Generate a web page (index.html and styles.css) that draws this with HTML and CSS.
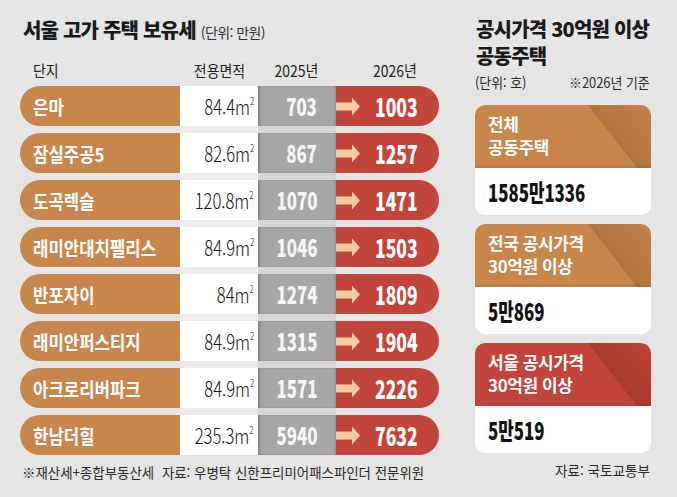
FILE: index.html
```html
<!DOCTYPE html>
<html lang="ko">
<head>
<meta charset="utf-8">
<title>서울 고가 주택 보유세</title>
<link rel="stylesheet" href="styles.css">
</head>
<body>
<div class="page">
  <section class="left">
    <h1 class="title">서울 고가 주택 보유세 <span class="unit">(단위: 만원)</span></h1>
    <div class="thead">
      <div class="h1"><span class="sx">단지</span></div>
      <div class="h2"><span class="sx c">전용면적</span></div>
      <div class="h3"><span class="sx r">2025년</span></div>
      <div class="h4"><span class="sx">2026년</span></div>
    </div>
    <div class="rows">
      <div class="row"><div class="name"><span class="sx">은마</span></div><div class="area"><span class="sx r">84.4m<sup>2</sup></span></div><div class="y25"><span class="sx r">703</span></div><div class="y26"><svg class="arrow" viewBox="0 0 24 19" width="24" height="19"><polygon points="0,5.5 16,5.5 16,0.5 24,9.5 16,18.5 16,13.5 0,13.5"/></svg><span class="sx">1003</span></div></div>
      <div class="row"><div class="name"><span class="sx">잠실주공5</span></div><div class="area"><span class="sx r">82.6m<sup>2</sup></span></div><div class="y25"><span class="sx r">867</span></div><div class="y26"><svg class="arrow" viewBox="0 0 24 19" width="24" height="19"><polygon points="0,5.5 16,5.5 16,0.5 24,9.5 16,18.5 16,13.5 0,13.5"/></svg><span class="sx">1257</span></div></div>
      <div class="row"><div class="name"><span class="sx">도곡렉슬</span></div><div class="area"><span class="sx r">120.8m<sup>2</sup></span></div><div class="y25"><span class="sx r">1070</span></div><div class="y26"><svg class="arrow" viewBox="0 0 24 19" width="24" height="19"><polygon points="0,5.5 16,5.5 16,0.5 24,9.5 16,18.5 16,13.5 0,13.5"/></svg><span class="sx">1471</span></div></div>
      <div class="row"><div class="name"><span class="sx">래미안대치팰리스</span></div><div class="area"><span class="sx r">84.9m<sup>2</sup></span></div><div class="y25"><span class="sx r">1046</span></div><div class="y26"><svg class="arrow" viewBox="0 0 24 19" width="24" height="19"><polygon points="0,5.5 16,5.5 16,0.5 24,9.5 16,18.5 16,13.5 0,13.5"/></svg><span class="sx">1503</span></div></div>
      <div class="row"><div class="name"><span class="sx">반포자이</span></div><div class="area"><span class="sx r">84m<sup>2</sup></span></div><div class="y25"><span class="sx r">1274</span></div><div class="y26"><svg class="arrow" viewBox="0 0 24 19" width="24" height="19"><polygon points="0,5.5 16,5.5 16,0.5 24,9.5 16,18.5 16,13.5 0,13.5"/></svg><span class="sx">1809</span></div></div>
      <div class="row"><div class="name"><span class="sx">래미안퍼스티지</span></div><div class="area"><span class="sx r">84.9m<sup>2</sup></span></div><div class="y25"><span class="sx r">1315</span></div><div class="y26"><svg class="arrow" viewBox="0 0 24 19" width="24" height="19"><polygon points="0,5.5 16,5.5 16,0.5 24,9.5 16,18.5 16,13.5 0,13.5"/></svg><span class="sx">1904</span></div></div>
      <div class="row"><div class="name"><span class="sx">아크로리버파크</span></div><div class="area"><span class="sx r">84.9m<sup>2</sup></span></div><div class="y25"><span class="sx r">1571</span></div><div class="y26"><svg class="arrow" viewBox="0 0 24 19" width="24" height="19"><polygon points="0,5.5 16,5.5 16,0.5 24,9.5 16,18.5 16,13.5 0,13.5"/></svg><span class="sx">2226</span></div></div>
      <div class="row"><div class="name"><span class="sx">한남더힐</span></div><div class="area"><span class="sx r">235.3m<sup>2</sup></span></div><div class="y25"><span class="sx r">5940</span></div><div class="y26"><svg class="arrow" viewBox="0 0 24 19" width="24" height="19"><polygon points="0,5.5 16,5.5 16,0.5 24,9.5 16,18.5 16,13.5 0,13.5"/></svg><span class="sx">7632</span></div></div>
    </div>
    <p class="foot"><span class="sx">※재산세+종합부동산세<span class="src">자료: 우병탁 신한프리미어패스파인더 전문위원</span></span></p>
  </section>
  <aside class="right">
    <h2 class="rtitle">공시가격 30억원 이상<br>공동주택</h2>
    <div class="meta"><span class="sx">(단위: 호)</span><span class="sx r">※2026년 기준</span></div>
    <div class="cards">
      <div class="card orange">
        <div class="chead"><span class="ln">전체</span><span class="ln">공동주택</span></div>
        <div class="cbody"><span class="sx">1585만1336</span></div>
      </div>
      <div class="card orange">
        <div class="chead"><span class="ln">전국 공시가격</span><span class="ln">30억원 이상</span></div>
        <div class="cbody"><span class="sx">5만869</span></div>
      </div>
      <div class="card red">
        <div class="chead"><span class="ln">서울 공시가격</span><span class="ln">30억원 이상</span></div>
        <div class="cbody"><span class="sx">5만519</span></div>
      </div>
    </div>
    <p class="rfoot"><span class="sx r">자료: 국토교통부</span></p>
  </aside>
</div>
</body>
</html>
```
FILE: styles.css
```css
html, body {
  margin: 0;
  padding: 0;
}
body {
  background: #e5e5e5;
  font-family: "Noto Sans CJK KR", "Noto Sans", sans-serif;
  color: #1a1a1a;
}
.page {
  width: 677px;
  height: 497px;
  box-sizing: border-box;
  padding-left: 20px;
  display: flex;
  gap: 36px;
  overflow: hidden;
}
.sx {
  display: inline-block;
  transform-origin: left center;
}
.sx.r { transform-origin: right center; }
.sx.c { transform-origin: center center; }

/* left */
.left {
  width: 419px;
  display: flex;
  flex-direction: column;
}
.title {
  margin: 18px 0 0 3px;
  font-size: 20px;
  line-height: 24px;
  font-weight: 900;
  letter-spacing: -0.8px;
  display: flex;
  align-items: baseline;
  gap: 5px;
}
.unit {
  font-size: 14px;
  font-weight: 400;
  letter-spacing: -0.6px;
  color: #333;
}
.thead {
  display: grid;
  grid-template-columns: 160px 78px 78px 103px;
  margin-top: 16px;
  height: 20px;
  line-height: 20px;
  font-size: 16px;
  color: #222;
}
.thead .sx { transform: scaleX(.87); }
.h1 { padding-left: 13px; }
.h2 { text-align: center; }
.h3 { text-align: right; padding-right: 18px; }
.h4 { padding-left: 37px; }

.rows {
  margin-top: 6px;
  display: flex;
  flex-direction: column;
  gap: 7px;
  background: linear-gradient(to right,
    transparent 160px, #ececec 160px, #ececec 238px,
    #d6d6d6 238px, #d6d6d6 316px, transparent 316px);
}
.row {
  display: grid;
  grid-template-columns: 160px 78px 78px 103px;
  height: 40px;
}
.row > div {
  display: flex;
  align-items: center;
  line-height: 1;
}
.name {
  background: #c7874c;
  border-radius: 20px 0 0 20px;
  color: #fff;
  font-weight: 700;
  font-size: 19px;
  padding-left: 13px;
}
.name .sx { transform: scaleX(.88); white-space: nowrap; }
.area {
  background: #fff;
  justify-content: flex-end;
  padding-right: 4px;
  font-size: 21px;
  font-weight: 300;
  color: #111;
}
.area .sx { transform: scaleX(.79); }
.area sup {
  font-size: 10px;
  vertical-align: 10px;
  line-height: 0;
}
.y25 {
  background: #a7a7a7;
  box-shadow: inset 3px 0 3px -1px rgba(0,0,0,.22), inset -2px 0 3px -1px rgba(0,0,0,.18);
  justify-content: flex-end;
  padding-right: 19px;
  color: #f6f6f6;
  font-weight: 900;
  font-size: 24px;
}
.y25 .sx { transform: scaleX(.7); }
.y26 {
  background: #c1453a;
  border-radius: 0 20px 20px 0;
  color: #fff;
  font-weight: 900;
  font-size: 25px;
}
.y26 .sx { transform: scaleX(.7); margin-left: 15px; }
.arrow {
  display: block;
  fill: #f4cba3;
  flex: none;
}
.foot {
  margin: 8px 0 0 2px;
  font-size: 14px;
  line-height: 18px;
  color: #2a2a2a;
  white-space: nowrap;
}
.foot .sx { transform: scaleX(.96); }
.src { margin-left: 8px; }

/* right */
.right {
  width: 176px;
  display: flex;
  flex-direction: column;
}
.rtitle {
  margin: 15px 0 0 1px;
  font-size: 20px;
  line-height: 27px;
  font-weight: 900;
  letter-spacing: -0.8px;
}
.meta {
  margin-top: 4px;
  display: flex;
  justify-content: space-between;
  font-size: 14px;
  line-height: 18px;
  color: #2a2a2a;
  padding-right: 1px;
  white-space: nowrap;
}
.meta .sx { transform: scaleX(.92); }
.cards {
  margin-top: 14px;
  display: flex;
  flex-direction: column;
  gap: 9px;
}
.card {
  height: 110px;
  border-radius: 10px;
  overflow: hidden;
  background: #fff;
  display: flex;
  flex-direction: column;
}
.chead {
  height: 63px;
  box-sizing: border-box;
  padding: 7px 0 0 13px;
  color: #fff;
  font-weight: 700;
  font-size: 17px;
  letter-spacing: -0.4px;
  box-shadow: inset 0 -2px 2px rgba(0,0,0,.08);
}
.ln {
  display: block;
  height: 23px;
  line-height: 23px;
  white-space: nowrap;
}
.orange .chead {
  background: linear-gradient(52deg, #c7874c 72%, #b2743e 72%, #c2834b 100%);
}
.red .chead {
  background: linear-gradient(52deg, #c1453a 72%, #ab3a31 72%, #bd4338 100%);
}
.cbody {
  flex: 1;
  display: flex;
  align-items: center;
  padding-left: 13px;
  font-weight: 900;
  font-size: 24px;
  line-height: 1;
  color: #111;
}
.cbody .sx { transform: scaleX(.7); }
.rfoot {
  margin: 8px 0 0;
  padding-right: 1px;
  text-align: right;
  font-size: 14px;
  line-height: 18px;
  color: #2a2a2a;
  white-space: nowrap;
}
.rfoot .sx { transform: scaleX(.97); }
```
